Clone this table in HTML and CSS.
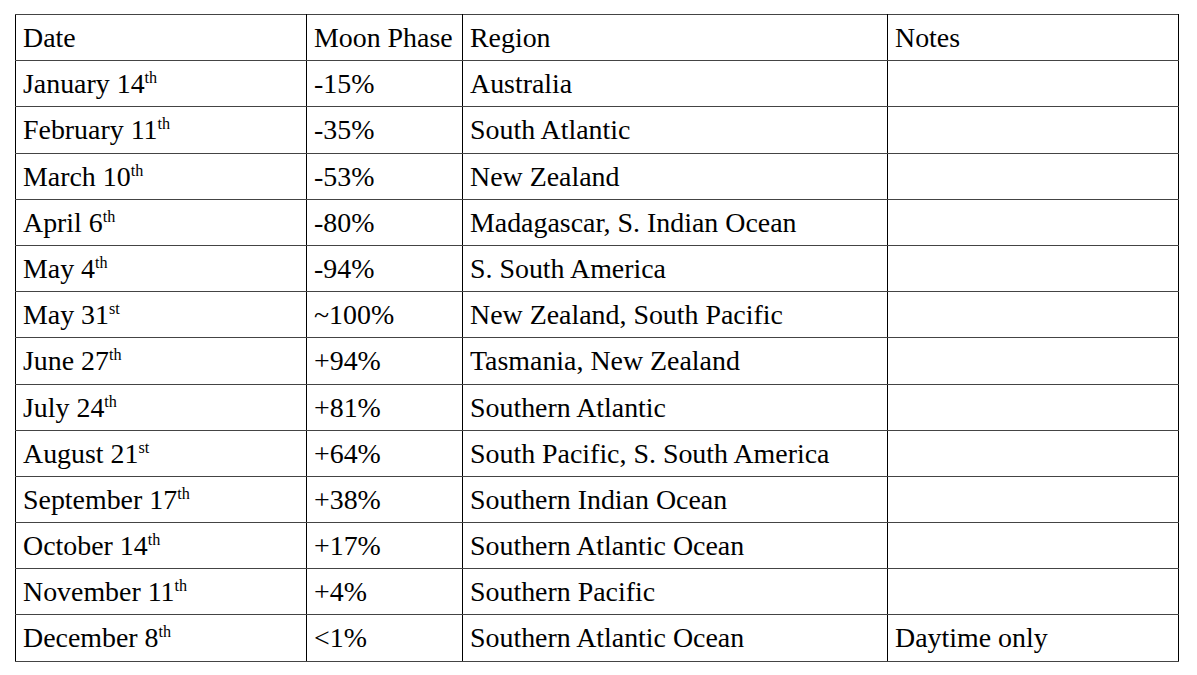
FILE: index.html
```html
<!DOCTYPE html>
<html>
<head>
<meta charset="utf-8">
<link rel="stylesheet" href="styles.css">
</head>
<body>
<div class="page">
<table class="eclipse">
<colgroup><col class="c1"><col class="c2"><col class="c3"><col class="c4"></colgroup>
<tr><td>Date</td><td>Moon Phase</td><td>Region</td><td>Notes</td></tr>
<tr><td>January 14<sup>th</sup></td><td>-15%</td><td>Australia</td><td></td></tr>
<tr><td>February 11<sup>th</sup></td><td>-35%</td><td>South Atlantic</td><td></td></tr>
<tr><td>March 10<sup>th</sup></td><td>-53%</td><td>New Zealand</td><td></td></tr>
<tr><td>April 6<sup>th</sup></td><td>-80%</td><td>Madagascar, S. Indian Ocean</td><td></td></tr>
<tr><td>May 4<sup>th</sup></td><td>-94%</td><td>S. South America</td><td></td></tr>
<tr><td>May 31<sup>st</sup></td><td>~100%</td><td>New Zealand, South Pacific</td><td></td></tr>
<tr><td>June 27<sup>th</sup></td><td>+94%</td><td>Tasmania, New Zealand</td><td></td></tr>
<tr><td>July 24<sup>th</sup></td><td>+81%</td><td>Southern Atlantic</td><td></td></tr>
<tr><td>August 21<sup>st</sup></td><td>+64%</td><td>South Pacific, S. South America</td><td></td></tr>
<tr><td>September 17<sup>th</sup></td><td>+38%</td><td>Southern Indian Ocean</td><td></td></tr>
<tr><td>October 14<sup>th</sup></td><td>+17%</td><td>Southern Atlantic Ocean</td><td></td></tr>
<tr><td>November 11<sup>th</sup></td><td>+4%</td><td>Southern Pacific</td><td></td></tr>
<tr><td>December 8<sup>th</sup></td><td>&lt;1%</td><td>Southern Atlantic Ocean</td><td>Daytime only</td></tr>
</table>
</div>
</body>
</html>
```
FILE: styles.css
```css
html, body {
  margin: 0;
  padding: 0;
  background: #fff;
}
.page {
  padding: 14px 0 0 15px;
}
.eclipse {
  border-collapse: collapse;
  table-layout: fixed;
  width: 1163px;
  font-family: "Liberation Serif", "Times New Roman", serif;
  font-size: 27.9px;
  color: #000;
}
.c1 { width: 291px; }
.c2 { width: 156px; }
.c3 { width: 425px; }
.c4 { width: 291px; }
.eclipse td {
  height: 46.2px;
  box-sizing: border-box;
  padding: 1px 7px 0 7px;
  border-top: 1px solid #444;
  border-bottom: 1px solid #444;
  border-left: 1px solid #000;
  border-right: 1px solid #000;
  vertical-align: middle;
  line-height: 1.15;
  white-space: nowrap;
}
.eclipse sup {
  font-size: 0.58em;
  line-height: 0;
  vertical-align: 0.62em;
}
```
